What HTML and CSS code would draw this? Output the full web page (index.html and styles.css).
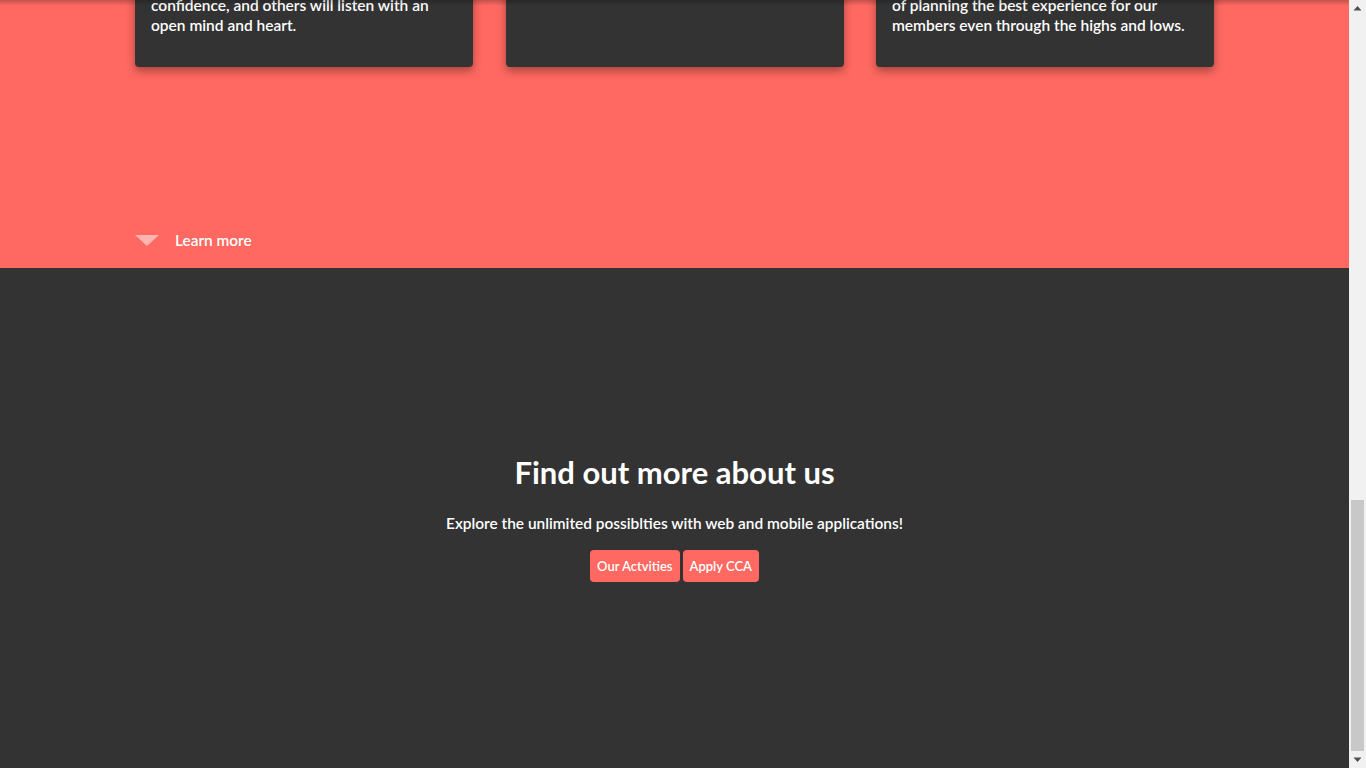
FILE: index.html
```html
<!DOCTYPE html>
<html lang="en">
<head>
<meta charset="utf-8">
<title>Coding Club</title>
<link rel="stylesheet" href="styles.css">
</head>
<body>
<div class="window">
  <main class="page">
    <section class="values">
      <div class="container">
        <div class="cards">
          <article class="card">
            <p class="card-text">We believe that everyone deserves a voice. Every member can share ideas with<br>confidence, and others will listen with an open mind and heart.</p>
          </article>
          <article class="card">
            <p class="card-text">We encourage members to explore and build projects they love.</p>
          </article>
          <article class="card">
            <p class="card-text">Our committee works hard behind the scenes and takes pride in the process<br>of planning the best experience for our members even through the highs and lows.</p>
          </article>
        </div>
        <a class="learn-more" href="#">
          <span class="tri"></span>
          <span>Learn more</span>
        </a>
      </div>
    </section>

    <section class="cta">
      <h2 class="cta-title">Find out more about us</h2>
      <p class="cta-sub">Explore the unlimited possiblties with web and mobile applications!</p>
      <div class="cta-buttons">
        <a class="btn" href="#">Our Actvities</a>
        <a class="btn" href="#">Apply CCA</a>
      </div>
    </section>
  </main>

  <div class="scrollbar" aria-hidden="true">
    <div class="sb-btn">
      <svg width="17" height="17" viewBox="0 0 17 17"><path d="M4.5 10.5 L8.5 6 L12.5 10.5 Z" fill="#505050"/></svg>
    </div>
    <div class="sb-track"><div class="sb-thumb"></div></div>
    <div class="sb-btn">
      <svg width="17" height="17" viewBox="0 0 17 17"><path d="M4.5 6.5 L8.5 11 L12.5 6.5 Z" fill="#505050"/></svg>
    </div>
  </div>
</div>
</body>
</html>
```

FILE: styles.css
```css
* { box-sizing: border-box; }
html, body { margin: 0; padding: 0; }
body {
  font-family: Lato, "Open Sans", sans-serif;
  color: #fff;
  background: #333333;
  overflow: hidden;
}
a { color: inherit; text-decoration: none; }

.window {
  display: flex;
  height: 768px;
}

.page {
  flex: 1;
  height: 768px;
  overflow: hidden;
  display: flex;
  flex-direction: column;
  justify-content: flex-end;
  position: relative;
}
.page::after {
  content: "";
  position: absolute;
  top: 0; left: 0; right: 0;
  height: 6px;
  background: linear-gradient(rgba(0,0,0,0.22), rgba(0,0,0,0));
  pointer-events: none;
}

.container {
  width: 1079px;
  margin: 0 auto;
}

.values {
  flex-shrink: 0;
  background: #ff6961;
  padding: 0 0 16px;
}

.cards {
  display: grid;
  grid-template-columns: repeat(3, 338px);
  column-gap: 32.5px;
}
.card {
  background: #333333;
  border-radius: 4px;
  padding: 16px;
  box-shadow: 0 4px 10px rgba(0,0,0,0.35);
}
.card-text {
  font-size: 15.5px;
  line-height: 20px;
  font-weight: 600;
  margin: 0 0 16px;
}

.learn-more {
  display: flex;
  align-items: center;
  margin-top: 161px;
  height: 24px;
  font-weight: 600;
  font-size: 15.4px;
}
.tri {
  width: 0; height: 0;
  border-left: 12px solid transparent;
  border-right: 12px solid transparent;
  border-top: 11px solid rgba(255,255,255,0.5);
  margin-right: 16px;
}

.cta {
  flex-shrink: 0;
  background: #333333;
  height: 500px;
  display: flex;
  flex-direction: column;
  align-items: center;
  justify-content: center;
  text-align: center;
}
.cta-title {
  font-size: 31px;
  line-height: 34px;
  font-weight: 700;
  margin: 0 0 25px;
}
.cta-sub {
  font-size: 15.45px;
  line-height: 19px;
  font-weight: 600;
  margin: 0 0 17px;
}
.cta-buttons { display: flex; gap: 3px; }
.btn {
  background: #ff6961;
  color: #fff;
  height: 32px;
  line-height: 32px;
  padding: 0 7px;
  border-radius: 4px;
  font-size: 13px;
  font-weight: 600;
}

.scrollbar {
  width: 17px;
  flex-shrink: 0;
  height: 768px;
  background: #f1f1f1;
  display: flex;
  flex-direction: column;
}
.sb-btn {
  height: 17px;
  flex-shrink: 0;
}
.sb-btn svg { display: block; }
.sb-track {
  flex: 1;
  display: flex;
  flex-direction: column;
  justify-content: flex-end;
  padding: 0 2px;
}
.sb-thumb {
  height: 251px;
  background: #c8c8c8;
}
```
